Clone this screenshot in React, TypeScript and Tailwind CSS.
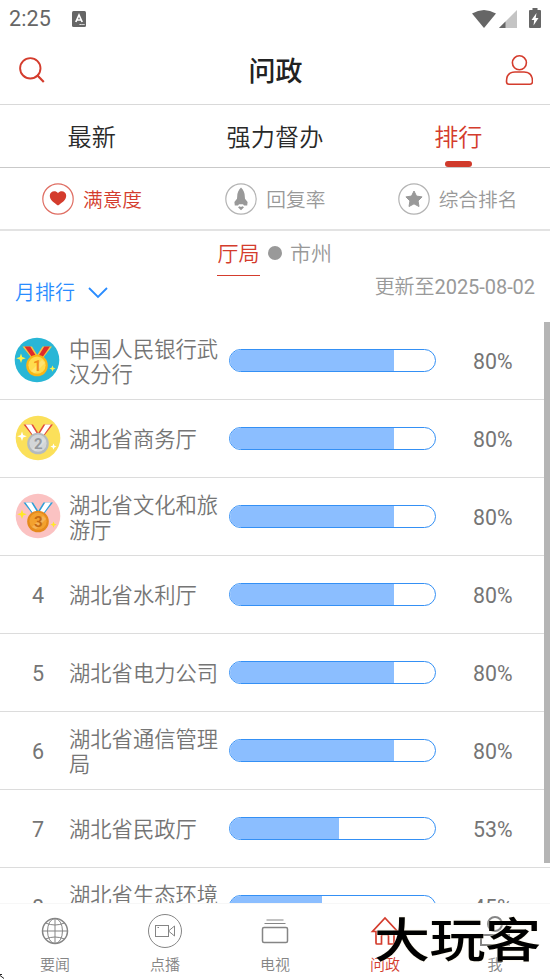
import React from "react";

type Rank = { name: string[]; pct: number };

const rows: Rank[] = [
  { name: ["中国人民银行武", "汉分行"], pct: 80 },
  { name: ["湖北省商务厅"], pct: 80 },
  { name: ["湖北省文化和旅", "游厅"], pct: 80 },
  { name: ["湖北省水利厅"], pct: 80 },
  { name: ["湖北省电力公司"], pct: 80 },
  { name: ["湖北省通信管理", "局"], pct: 80 },
  { name: ["湖北省民政厅"], pct: 53 },
  { name: ["湖北省生态环境", "厅"], pct: 45 },
];

const medals = [
  { bg: "#29b6d6", ribbon: "#e02b2b", edge: "#f5c542", rim: "#f9b516", face: "#ffdc4e", num: "#f08c1c", star: "#fff04a" },
  { bg: "#fbe05a", ribbon: "#ffffff", edge: "#e34a3c", rim: "#b4babd", face: "#d3d6d8", num: "#969a9e", star: "#ffffff" },
  { bg: "#fbc2c2", ribbon: "#ffffff", edge: "#2d9fd9", rim: "#e58a1c", face: "#f3a12e", num: "#c56a12", star: "#ffe926" },
];

function Medal({ rank }: { rank: number }) {
  const m = medals[rank - 1];
  return (
    <svg width="46" height="46" viewBox="0 0 46 46">
      <circle cx="23" cy="23" r="22.3" fill={m.bg} />
      <path d="M8.500 9.500h9.500l7.500 12-6 2zM38 9.500h-9.500l-7.500 12 6 2z" fill={m.edge} />
      <path d="M10.500 9.500h5.700l8 13-3.500 1.500zM36 9.500h-5.700l-8 13 3.500 1.500z" fill={m.ribbon} />
      <circle cx="23" cy="28.500" r="10.800" fill={m.rim} />
      <circle cx="23" cy="28.200" r="8.600" fill={m.face} />
      <path d="M17 34l11-11 3 3-10 10z" fill="#fff" opacity=".2" />
      <text x="23.200" y="33.700" textAnchor="middle" fill={m.num} className="font-['Roboto'] text-[15px] font-bold">{rank}</text>
      <path d="M7 16.500l1.200 3.600 3.600 1.200-3.600 1.200L7 26.100l-1.200-3.600-3.600-1.200 3.600-1.200zM38.500 28.500l.9 2.200 2.200.9-2.200.9-.9 2.200-.9-2.200-2.200-.9 2.200-.9z" fill={m.star} />
    </svg>
  );
}

function StatusBar() {
  return (
    <div className="flex h-[37px] items-center pl-[9px] pr-[9px] text-[#666]">
      <span className="w-[63px] pt-px font-['Roboto'] text-[21.5px] font-normal leading-6 tracking-[0.1px]">2:25</span>
      <svg width="14" height="16" viewBox="0 0 14 16">
        <rect width="14" height="16" rx="1.500" fill="#666" />
        <path d="M3.800 11L7 4l3.200 7M5 9h4" stroke="#fff" strokeWidth="1.700" fill="none" />
        <path d="M7.500 13.500h5" stroke="#fff" strokeWidth="1" strokeDasharray="1.300 .6" />
      </svg>
      <div className="ml-auto flex items-center">
        <svg width="24" height="18" viewBox="0 0 24 18"><path d="M0 3.500Q12-3.500 24 3.500L12 18z" fill="#666" /></svg>
        <svg className="ml-[3px]" width="18" height="18" viewBox="0 0 18 18"><path d="M18 0v18H0z" fill="#c4c4c4" /><path d="M6.500 11.500V18H0z" fill="#666" /></svg>
        <svg className="ml-3 -mt-px" width="12" height="20" viewBox="0 0 12 20"><path d="M3.500 0h5v2H11q1 0 1 1v16q0 1-1 1H1q-1 0-1-1V3q0-1 1-1h2.500z" fill="#666" /><path d="M7.500 5L2.500 12H5.200L4.500 17.500 9.500 10H6.700z" fill="#fff" /></svg>
      </div>
    </div>
  );
}

function RankRow({ item, rank }: { item: Rank; rank: number }) {
  return (
    <li className="flex h-[78px] shrink-0 items-center border-b border-[#dcdcdc] text-[#757575]">
      <div className={rank === 1 ? "ml-[14px] -mt-px flex w-[55px] shrink-0" : rank < 4 ? "-mt-px ml-[15px] flex w-[54px] shrink-0" : "w-[69px] shrink-0 pl-[7px] pt-[3px] text-center text-[21.5px]"}>
        {rank < 4 ? <Medal rank={rank} /> : rank}
      </div>
      <div className={`w-[160px] shrink-0 whitespace-nowrap text-[21.3px] font-[350] leading-[25px] ${item.name.length > 1 ? "pt-[3px]" : "pt-px"}`}>
        {item.name.map((line) => <div key={line}>{line}</div>)}
      </div>
      <div className="h-[23px] w-[207px] shrink-0 overflow-hidden rounded-full border border-[#3490f5]">
        <div className="h-full bg-[#8bbeff]" style={{ width: `${item.pct}%` }} />
      </div>
      <span className="ml-[37px] pt-[3px] text-[21.3px]">{item.pct}%</span>
    </li>
  );
}

function Filter({ label, color, pad, children }: { label: string; color: string; pad: string; children: React.ReactNode }) {
  return (
    <div className={`flex items-center ${pad}`} style={{ color }}>
      <svg width="32" height="32" viewBox="0 0 32 32" fill="currentColor">
        <circle cx="16" cy="16" r="15.200" fill="none" stroke="currentColor" strokeWidth="1.200" opacity=".75" />
        {children}
      </svg>
      <span className="ml-[9px] whitespace-nowrap pt-1 text-[19.7px] font-[350]">{label}</span>
    </div>
  );
}

function NavItem({ label, active, children }: { label: string; active?: boolean; children: React.ReactNode }) {
  return (
    <div className={`flex flex-col items-center ${active ? "text-[#d43c2d]" : "text-[#858585]"}`}>
      <svg className="mt-[9px]" width="36" height="36" viewBox="0 0 36 36" fill="none" stroke="currentColor" strokeWidth="1.500">{children}</svg>
      <span className="mt-1 text-[15px] font-[350] leading-6">{label}</span>
    </div>
  );
}

export default function App() {
  return (
    <div className="relative flex h-[979px] w-[550px] flex-col overflow-hidden bg-white font-['Roboto','Noto_Sans_CJK_SC',sans-serif] text-[#222]">
      <StatusBar />
      <header className="flex h-[68px] items-center justify-between border-b border-[#d9d9d9] pl-[18px] pr-[17px]">
        <svg width="28" height="28" viewBox="0 0 28 28" fill="none" stroke="#d43c2d" strokeWidth="1.900"><circle cx="12.300" cy="11.300" r="10.200" /><path d="M19 18l6.800 7" strokeWidth="2.200" /></svg>
        <h1 className="pt-[3px] text-[27px] font-medium">问政</h1>
        <svg width="28" height="32" viewBox="0 0 28 32" fill="none" stroke="#d43c2d" strokeWidth="1.600"><circle cx="14.400" cy="7.800" r="7" /><path d="M1.500 26.500C1.500 20 5 17 10 17h9c5 0 8.500 3 8.500 9.500 0 1.800-.8 2.700-2.500 2.700H4c-1.700 0-2.500-.9-2.500-2.700z" /></svg>
      </header>
      <nav className="grid h-[63px] grid-cols-3 border-b border-[#c9c9c9] text-center text-[24.200px] font-[350] leading-[66px] text-[#292929]">
        <span>最新</span>
        <span>强力督办</span>
        <span className="flex flex-col items-center text-[#d43c2d]"><span className="h-[56px] shrink-0">排行</span><i className="h-[6px] w-[27px] rounded-full bg-[#d03a2b]" /></span>
      </nav>
      <div className="grid h-[63px] grid-cols-3 border-b-2 border-[#e3e3e3]">
        <Filter label="满意度" color="#d43c2d" pad="pl-[42px]">
          <path d="M16 22.500c-4-3-8.200-5.500-8.200-9.800 0-4.500 5.800-6 8.200-2.400 2.400-3.600 8.200-2.100 8.200 2.400 0 4.300-4.200 6.800-8.200 9.800z" />
        </Filter>
        <Filter label="回复率" color="#999999" pad="pl-[42px]">
          <path d="M16 4.500c2.700 2.500 3.800 5.500 3.800 9l.2 2.200 2.600 3.300-.4 3.500h-3.200l-1-1.200h-4l-1 1.200H9.800L9.400 19l2.600-3.300.2-2.200c0-3.500 1.100-6.500 3.800-9zM13 24.300l1.500-1 1.500.7 1.500-.7 1.500 1-3 3z" />
        </Filter>
        <Filter label="综合排名" color="#999999" pad="pl-[31px]">
          <path strokeLinejoin="round" strokeWidth="1" stroke="currentColor" d="M16 8l2.500 5.100 5.600.8-4.050 4 .95 5.600-5-2.650-5 2.650.95-5.600-4.050-4 5.600-.8z" />
        </Filter>
      </div>
      <div className="flex h-[91px] shrink-0 flex-col">
        <div className="flex h-[45px] shrink-0 justify-center pr-px text-[21px] font-[350] leading-[46px] text-[#999]">
          <span className="h-[45px] w-[43px] border-b border-[#d43c2d] text-center text-[#d43c2d]">厅局</span>
          <i className="mx-2 mt-[15px] size-[14px] rounded-full bg-[#999]" />
          <span>市州</span>
        </div>
        <div className="flex justify-between px-[15px] text-[20px]">
          <div className="flex items-center font-[350] text-[#2a8cff]">
            <span className="pt-px leading-8">月排行</span>
            <svg className="ml-[13px]" width="20" height="12" viewBox="0 0 20 12" fill="none" stroke="currentColor" strokeWidth="1.800"><path d="M1 1l9 9 9-9" /></svg>
          </div>
          <span className="-mt-[5px] leading-8 tracking-[-0.05px] text-[#999]"><span className="font-[350]">更新至</span>2025-08-02</span>
        </div>
      </div>
      <main className="relative h-[581px] shrink-0 overflow-hidden">
        <ul>
          {rows.map((item, i) => <RankRow key={item.name[0]} item={item} rank={i + 1} />)}
        </ul>
        <div className="absolute right-0 top-0 h-[541px] w-[6px] bg-[#b5b5b5]" />
      </main>
      <footer className="grid h-[76px] shrink-0 grid-cols-5 border-t border-[#f7f7f7] bg-white">
        <NavItem label="要闻">
          <circle cx="18" cy="18" r="12.500" /><ellipse cx="18" cy="18" rx="7.500" ry="12.500" strokeWidth="1" /><path d="M18 5.500v25M5.500 18h25M8.500 10q9.500 4 19 0M8.500 26q9.500-4 19 0" strokeWidth="1" />
        </NavItem>
        <NavItem label="点播">
          <g strokeWidth="1"><circle cx="18" cy="18" r="16.500" /><rect x="8.500" y="12.500" width="13" height="11" /><path d="M21.500 18l6-5v10zM10.500 14.500h1.500" /></g>
        </NavItem>
        <NavItem label="电视">
          <rect x="5.500" y="14.500" width="25" height="15" rx="1.500" /><path d="M7.500 10.500h21M9.500 7h17" strokeWidth="1.200" />
        </NavItem>
        <NavItem label="问政" active>
          <path d="M9 18.500H5.500L18 5l12.500 13.500H27V30q0 1-1 1h-4.500v-8q0-1.500-1.500-1.500h-4q-1.500 0-1.500 1.500v8H10q-1 0-1-1z" strokeWidth="1.700" />
        </NavItem>
        <NavItem label="我">
          <circle cx="18" cy="11" r="7" strokeWidth="2" /><rect x="4" y="22" width="28" height="10" strokeWidth="2" />
        </NavItem>
      </footer>
      <div className="absolute left-[374px] top-[907px] origin-center scale-y-[0.84] whitespace-nowrap font-['Noto_Sans_CJK_SC',sans-serif] text-[56px] font-medium leading-[60px] tracking-[-0.5px] text-black [text-shadow:0_0_2px_#f5ecd0]">大玩客</div>
      <svg className="absolute bottom-0 left-0" width="5" height="5" viewBox="0 0 5 5"><path d="M0 .5h2M0 1.500l4 3" stroke="#222" /></svg>
    </div>
  );
}
